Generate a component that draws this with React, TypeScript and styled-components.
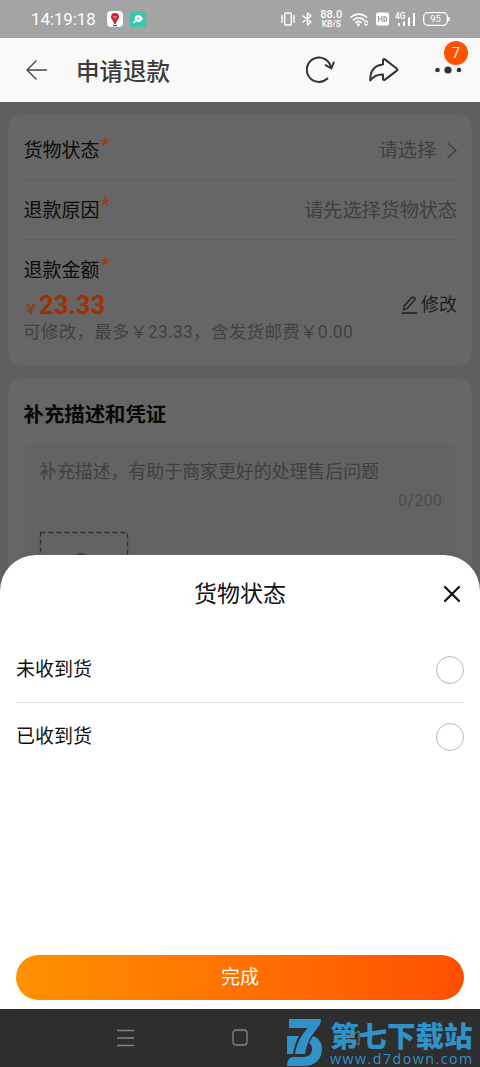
import React from "react";
import styled, { createGlobalStyle } from "styled-components";

const Global = createGlobalStyle`
  * { box-sizing: border-box; }
  body { margin: 0; background: #5f5f5f; font-family: Roboto, "Noto Sans CJK SC", sans-serif; }
`;
const Screen = styled.div`
  width: 480px; height: 1067px; overflow: hidden; position: relative;
  display: flex; flex-direction: column; background: #606060;
`;
const StatusBar = styled.div`
  height: 38px; flex: none; background: #a4a4a4; display: flex; align-items: center;
  justify-content: space-between; padding: 0 30px 0 31px; color: #fff;
`;
const Group = styled.div<{ $gap: number }>`display: flex; align-items: center; gap: ${(p) => p.$gap}px;`;
const Clock = styled.span`font: 400 16.8px/20px Roboto, sans-serif; width: 65px; white-space: nowrap; margin-right: 4px;`;
const Speed = styled.div`
  font: 500 11px/10px Roboto, sans-serif; text-align: center; width: 24px;
  display: flex; flex-direction: column; align-items: center; white-space: nowrap;
  small { font-size: 8.5px; line-height: 9px; }
`;
const NavBar = styled.header`
  height: 64px; flex: none; background: #f9f9f9; display: flex; align-items: center;
  padding: 0 18px 0 26px; position: relative;
`;
const PageTitle = styled.h1`
  margin: 3px auto 0 28px; font-size: 23.5px; line-height: 34px; font-weight: 500; color: #3c3c3c;
`;
const Badge = styled.span`
  position: absolute; left: 444px; top: 3px; width: 24px; height: 24px; border-radius: 50%;
  background: #ff5000; color: #fff; font-size: 14px; line-height: 25px; text-align: center;
`;
const Content = styled.main`
  flex: 1; padding: 12px 8px 0; display: flex; flex-direction: column; gap: 12px; overflow: hidden;
`;
const Card = styled.section<{ $h: number }>`
  flex: none; height: ${(p) => p.$h}px; border-radius: 16px; background: #666; padding: 6px 15px 0;
`;
const Row = styled.div`
  height: 60px; display: flex; align-items: center; justify-content: space-between;
  border-bottom: 1px solid #5d5d5d; padding: 3px 0 0 0.5px;
`;
const Label = styled.span`
  font-size: 19px; line-height: 28px; color: #0b0b0b; display: flex;
`;
const Star = styled.sup`
  font-size: 20px; line-height: 17px; color: #9a3c18; margin-left: 1.5px; font-weight: 500;
`;
const Value = styled.span`
  font-size: 19.1px; line-height: 28px; color: #3f3f3f; display: flex; align-items: center; gap: 11px;
`;
const AmountLabel = styled.div`padding: 17px 0 0 0.5px; height: 50px;`;
const PriceRow = styled.div`display: flex; justify-content: space-between; align-items: center; height: 30px;`;
const Price = styled.strong`
  font-size: 25.6px; line-height: 30px; color: #a22f04; font-weight: 700; display: flex; align-items: baseline; padding-top: 3px;
  small { font-size: 14px; width: 16px; font-weight: 500; padding-left: 1px; }
`;
const Edit = styled.span`font-size: 18px; line-height: 24px; color: #1c1c1c; display: flex; align-items: center; gap: 3px;`;
const Note = styled.p`margin: 0; font-size: 17.6px; line-height: 24px; letter-spacing: 0.23px; color: #414141; white-space: nowrap;`;
const SectionTitle = styled.h2`
  margin: 17px 0 15px 0.5px; font-size: 20.4px; line-height: 28px; color: #080808; font-weight: 700;
`;
const Field = styled.div`background: #636363; border-radius: 8px; height: 240px; padding: 15px 15px 0 16px;`;
const Placeholder = styled.p`margin: 0; font-size: 17.9px; line-height: 26px; color: #3f3f3f; white-space: nowrap;`;
const Count = styled.div`text-align: right; font-size: 16.5px; line-height: 24px; color: #4c4c4c; margin: 4px 0 0 0;`;
const Upload = styled.svg`display: block; margin-top: 18px;`;
const Sheet = styled.section`
  position: absolute; left: 0; top: 555px; width: 480px; height: 454px; background: #fff;
  border-radius: 36px 36px 0 0; padding: 0 16px 9px; display: flex; flex-direction: column;
`;
const SheetHead = styled.div`
  height: 81px; display: grid; grid-template-columns: 24px 1fr 24px; align-items: center; padding-bottom: 3px;
  h3 { margin: 2px 0 0; font-size: 23px; line-height: 32px; font-weight: 400; color: #111; text-align: center; }
`;
const Option = styled.label<{ $line?: boolean }>`
  height: 67px; display: flex; align-items: center; justify-content: space-between; padding-top: 1px;
  font-size: 19px; color: #111; border-bottom: 1px solid ${(p) => (p.$line ? "#e6e6e6" : "transparent")};
`;
const OptionText = styled.span`padding-bottom: 4px;`;
const Radio = styled.span`width: 28px; height: 28px; border: 1.5px solid #b8b8b8; border-radius: 50%;`;
const Submit = styled.button`
  margin-top: auto; height: 45px; border: 0; border-radius: 23px; color: #fff; font: 400 19px/45px Roboto, "Noto Sans CJK SC", sans-serif;
  background: linear-gradient(90deg, #ff9200, #ff5000); padding: 0 0 1px;
`;
const SystemBar = styled.footer`
  flex: none; height: 59px; background: #2e2e2e; position: relative; display: flex; align-items: center;
  padding-left: 117px; gap: 98px;
`;
const BackKey = styled.svg`position: relative; z-index: 1;`;
const Watermark = styled.div`
  position: absolute; left: 286px; top: 10px; width: 194px; height: 49px; display: flex; gap: 7px; color: #3192c9;
`;
const MarkText = styled.div`
  display: flex; flex-direction: column;
  b { font: 900 28.5px/33px "Noto Sans CJK SC", sans-serif; white-space: nowrap; }
  span { font: 400 14.2px/16px "Open Sans", "Noto Sans", sans-serif; letter-spacing: 1.5px; white-space: nowrap; }
`;

const line = { fill: "none", strokeLinecap: "round", strokeLinejoin: "round" } as const;

export default function App() {
  return (
    <Screen>
      <Global />
      <StatusBar>
        <Group $gap={7}>
          <Clock>14:19:18</Clock>
          <svg width="16" height="16" viewBox="0 0 16 16">
            <rect width="16" height="16" rx="4" fill="#fff" />
            <path d="M8 2a4 4 0 0 0-4 4c0 2.2 2.4 3.4 3.2 7h1.6C9.600 9.400 12 8.200 12 6a4 4 0 0 0-4-4z" fill="#d3222e" />
            <path d="M6 5.500h4M6.500 7h3" stroke="#f3a09e" strokeWidth=".7" />
            <path d="M6 14.500h4" stroke="#376a78" strokeWidth="1.400" />
          </svg>
          <svg width="16" height="16" viewBox="0 0 16 16">
            <rect width="16" height="16" rx="2.500" fill="#38c8b0" />
            <circle cx="8.300" cy="7.500" r="3.500" fill="#fff" />
            <circle cx="8.300" cy="7.500" r="1" fill="#38c8b0" />
            <path d="M5.500 10l-2 2M11 7.500h2" stroke="#fff" strokeWidth="1.500" />
          </svg>
        </Group>
        <Group $gap={6.7}>
          <svg width="14" height="14" viewBox="0 0 14 14" {...line} stroke="#fff" strokeWidth="1.400">
            <rect x="3.700" y="1" width="6.600" height="12" rx="1" /><path d="M1 3.500v7M13 3.500v7" />
          </svg>
          <svg width="11" height="14" viewBox="0 0 11 14" {...line} stroke="#fff" strokeWidth="1.400">
            <path d="M1 4l8 6-3.500 3V1L9 4l-8 6" />
          </svg>
          <Speed>88.0<small>KB/S</small></Speed>
          <svg width="19" height="15" viewBox="0 0 19 15" {...line} stroke="#fff" strokeWidth="1.700">
            <path d="M1 5.200c4.500-4.200 11-4.200 15.500 0M3.500 8c3-2.800 7.500-2.800 10.500 0M6 10.500c1.700-1.400 3.600-1.400 5 0" />
            <circle cx="8.500" cy="12.800" r=".6" /><path d="M14.800 10l1.300-1.300L17.400 10M14.800 12l1.300 1.300L17.400 12" strokeWidth="1.200" />
          </svg>
          <svg width="13" height="14" viewBox="0 0 13 14">
            <rect y=".5" width="13" height="13" rx="2" fill="#fff" />
            <path d="M2.500 4v6M6 4v6M2.500 7H6M8 4v6M8 4.500c3.500 0 3.500 5 0 5" fill="none" stroke="#999" strokeWidth="1.100" />
          </svg>
          <svg width="21" height="15" viewBox="0 0 21 15">
            <text x="0" y="6.800" fontSize="8.500" fontFamily="Roboto" fontWeight="500" fill="#fff">4G</text>
            <path d="M4 11v3M9 9.500V14M14 5.500V14M19 1v13" stroke="#fff" strokeWidth="2" />
          </svg>
          <svg width="27" height="14" viewBox="0 0 27 14">
            <rect x=".7" y=".7" width="23.600" height="12.600" rx="4" fill="none" stroke="#fff" strokeWidth="1.300" />
            <path d="M26 5v4" stroke="#fff" strokeWidth="1.500" />
            <text x="12.500" y="10.400" fontSize="9.500" textAnchor="middle" fontFamily="Roboto" fill="#fff">95</text>
          </svg>
        </Group>
      </StatusBar>
      <NavBar>
        <svg width="22" height="20" viewBox="0 0 22 20" {...line} stroke="#444" strokeWidth="1.400"><path d="M20.500 10H1M10 1L1 10l9 9" /></svg>
        <PageTitle>申请退款</PageTitle>
        <svg width="30" height="28" viewBox="0 0 30 28" {...line} stroke="#333" strokeWidth="2" style={{ marginRight: 33 }}>
          <path d="M21.400 22.600A12.200 12.200 0 1 1 25 11.500" /><path d="M19.600 9.200l5.800 3.300 2.300-6" />
        </svg>
        <svg width="30" height="26" viewBox="0 0 30 26" {...line} stroke="#333" strokeWidth="2" style={{ marginRight: 36 }}>
          <path d="M14 7.500V3.200c0-1 1-1.500 1.900-.8l12 9.300c.7.600.7 1.300 0 1.900l-12 9c-.9.700-1.900.3-1.900-.7v-4.400C8.500 17.300 4.500 19 1.300 23.500 1 14.500 5 8.500 14 7.500z" />
        </svg>
        <svg width="27" height="10" viewBox="0 0 27 10" fill="#333"><circle cx="2.500" cy="5" r="2.300" /><circle cx="13" cy="5" r="3.600" /><circle cx="24" cy="5" r="2.300" /></svg>
        <Badge>7</Badge>
      </NavBar>
      <Content>
        <Card $h={252}>
          <Row>
            <Label>货物状态<Star>*</Star></Label>
            <Value>请选择<svg width="10" height="16" viewBox="0 0 10 16" {...line} stroke="#3f3f3f" strokeWidth="1.500"><path d="M1 0.500l8 7-8 7" /></svg></Value>
          </Row>
          <Row><Label>退款原因<Star>*</Star></Label><Value>请先选择货物状态</Value></Row>
          <AmountLabel><Label>退款金额<Star>*</Star></Label></AmountLabel>
          <PriceRow>
            <Price><small>￥</small>23.33</Price>
            <Edit><svg width="17" height="19" viewBox="0 0 17 19" {...line} stroke="#1c1c1c" strokeWidth="1.300"><path d="M1 17h15M2.500 14l.7-4L11 1.300c1.200-1.200 4 .8 2.800 2.400L6.200 12.500z" /></svg>修改</Edit>
          </PriceRow>
          <Note>可修改，最多￥23.33，含发货邮费￥0.00</Note>
        </Card>
        <Card $h={600}>
          <SectionTitle>补充描述和凭证</SectionTitle>
          <Field>
            <Placeholder>补充描述，有助于商家更好的处理售后问题</Placeholder>
            <Count>0/200</Count>
            <Upload width="90" height="90" viewBox="0 0 90 90" fill="none" stroke="#303030" strokeWidth="1.300">
              <rect x="1.500" y="1.500" width="87" height="87" strokeDasharray="5 3" />
              <path d="M38 24l2-1h4l2 1" />
            </Upload>
          </Field>
        </Card>
      </Content>
      <SystemBar>
        <svg width="17" height="18" viewBox="0 0 17 18" stroke="#858585" strokeWidth="1.300"><path d="M0 1.500h17M0 9h17M0 16.500h17" /></svg>
        <svg width="16" height="17" viewBox="0 0 16 17" fill="none" stroke="#858585" strokeWidth="1.300"><rect x="1" y="1" width="14" height="15" rx="3" /></svg>
        <BackKey width="14" height="16" viewBox="0 0 14 16" fill="none" stroke="#6d8796" strokeWidth="1"><path d="M13 1v14L1 8z" /></BackKey>
        <Watermark>
          <svg width="37" height="49" viewBox="0 0 37 49" fill="#3192c9">
            <path d="M3 1h32c0 5-2 7-5 11-6 7-9 13-11 24H9c2-11 6-19 13-26H3z" />
            <path d="M1 18h12c-3 5-5 11-6 18H1z" />
            <path d="M27 18c6 2 9 7 9 13 0 10-7 17-18 17H1c0-5 2-9 6-9h10c6 0 9-3 9-8 0-3-1-5-3-6z" />
          </svg>
          <MarkText><b>第七下载站</b><span>www.d7down.com</span></MarkText>
        </Watermark>
      </SystemBar>
      <Sheet>
        <SheetHead>
          <span /><h3>货物状态</h3>
          <svg width="24" height="18" viewBox="0 0 24 18" {...line} stroke="#111" strokeWidth="2.200"><path d="M5 2l14 14M19 2L5 16" /></svg>
        </SheetHead>
        <Option $line><OptionText>未收到货</OptionText><Radio /></Option>
        <Option><OptionText>已收到货</OptionText><Radio /></Option>
        <Submit>完成</Submit>
      </Sheet>
    </Screen>
  );
}
